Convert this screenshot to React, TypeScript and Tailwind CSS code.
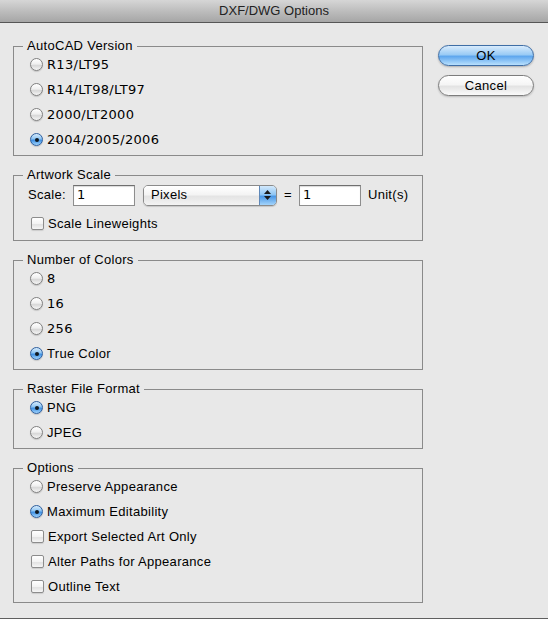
import React from "react";

const sans = { fontFamily: '"Liberation Sans", Arial, sans-serif', letterSpacing: "0.3px" };
const dv = { fontFamily: '"DejaVu Sans", sans-serif' };

function Radio({ checked }: { checked?: boolean }) {
  return checked ? (
    <span className="relative flex h-[13px] w-[13px] shrink-0 items-center justify-center rounded-full border border-[#2f5f9e] bg-[linear-gradient(180deg,#d6ebfc_0%,#8cc4f3_45%,#3d8fe3_55%,#9fd2fb_100%)] shadow-[0_1px_1px_rgba(0,0,0,0.15)]">
      <span className="h-[4px] w-[4px] rounded-full bg-[#101820]" />
    </span>
  ) : (
    <span className="h-[13px] w-[13px] shrink-0 rounded-full border border-[#808080] bg-[linear-gradient(180deg,#ffffff_0%,#f0f0f0_45%,#d8d8d8_60%,#f6f6f6_100%)] shadow-[0_1px_1px_rgba(0,0,0,0.15)]" />
  );
}

function Check() {
  return (
    <span className="h-[13px] w-[13px] shrink-0 rounded-[2px] border border-[#8c8c8c] bg-[linear-gradient(180deg,#ffffff_0%,#f3f3f3_50%,#e2e2e2_60%,#f6f6f6_100%)] shadow-[0_1px_1px_rgba(0,0,0,0.12)]" />
  );
}

function Row({
  kind,
  checked,
  label,
  digits,
}: {
  kind: "radio" | "check";
  checked?: boolean;
  label: string;
  digits?: boolean;
}) {
  return (
    <div className="flex h-[25px] items-center gap-[4px]">
      {kind === "radio" ? <Radio checked={checked} /> : <Check />}
      <span className="text-[13px] leading-[16px] text-black" style={digits ? dv : sans}>
        {label}
      </span>
    </div>
  );
}

function Group({
  title,
  className,
  children,
}: {
  title: string;
  className?: string;
  children: React.ReactNode;
}) {
  return (
    <div className={"relative border border-[#8a8a8a] " + (className ?? "")}>
      <span
        className="absolute left-[9px] top-[-9px] bg-[#e8e8e8] px-[4px] text-[13px] leading-[16px] text-black"
        style={sans}
      >
        {title}
      </span>
      {children}
    </div>
  );
}

function TextBox({ value, w }: { value: string; w: string }) {
  return (
    <div
      className={
        "flex h-[21px] items-center border border-[#8e8e8e] border-t-[#6f6f6f] bg-white pl-[3px] shadow-[inset_0_1px_1px_rgba(0,0,0,0.15)] " +
        w
      }
    >
      <span className="text-[13px] leading-[16px] text-black" style={dv}>
        {value}
      </span>
    </div>
  );
}

export default function App() {
  return (
    <div className="flex h-[619px] w-[548px] flex-col overflow-hidden border-b border-[#5f5f5f] bg-[#e8e8e8]" style={sans}>
      <div className="flex h-[23px] shrink-0 items-center justify-center border-b border-[#565656] bg-[linear-gradient(180deg,#d6d6d6_0%,#bdbdbd_50%,#a6a6a6_100%)]">
        <span className="text-[13px] leading-[16px] tracking-[0px] text-[#222]">DXF/DWG Options</span>
      </div>

      <div className="flex items-start pl-[13px]">
        <div className="flex w-[410px] flex-col gap-[19px] pt-[23px]">
          <Group title="AutoCAD Version" className="h-[110px] pl-[16px] pt-[5px]">
            <Row kind="radio" label="R13/LT95" digits />
            <Row kind="radio" label="R14/LT98/LT97" digits />
            <Row kind="radio" label="2000/LT2000" digits />
            <Row kind="radio" checked label="2004/2005/2006" digits />
          </Group>

          <Group title="Artwork Scale" className="h-[66px] pl-[14px] pt-[8px]">
            <div className="flex h-[22px] items-center">
              <span className="text-[13px] leading-[16px]">Scale:</span>
              <div className="ml-[7px]">
                <TextBox value="1" w="w-[62px]" />
              </div>
              <div className="ml-[8px] flex h-[21px] w-[134px] overflow-hidden rounded-[5px] border border-[#8a8a8a] shadow-[0_1px_1px_rgba(0,0,0,0.15)]">
                <div className="flex flex-1 items-center bg-[linear-gradient(180deg,#ffffff_0%,#f4f4f4_45%,#e4e4e4_55%,#f3f3f3_100%)] pl-[7px]">
                  <span className="text-[13px] leading-[16px]">Pixels</span>
                </div>
                <div className="flex w-[17px] flex-col items-center justify-center gap-[2px] border-l border-[#5f88b8] bg-[linear-gradient(180deg,#d3e9fc_0%,#8fc6f4_45%,#4b98e6_55%,#a4d4fb_100%)]">
                  <svg width="7" height="4" viewBox="0 0 7 4">
                    <path d="M3.5 0L7 4H0z" fill="#1a1a1a" />
                  </svg>
                  <svg width="7" height="4" viewBox="0 0 7 4">
                    <path d="M0 0H7L3.5 4z" fill="#1a1a1a" />
                  </svg>
                </div>
              </div>
              <span className="ml-[4px] w-[14px] text-center text-[13px] leading-[16px]">=</span>
              <div className="ml-[4px]">
                <TextBox value="1" w="w-[62px]" />
              </div>
              <span className="ml-[7px] text-[13px] leading-[16px]">Unit(s)</span>
            </div>
            <div className="mt-[5px] pl-[3px]">
              <Row kind="check" label="Scale Lineweights" />
            </div>
          </Group>

          <Group title="Number of Colors" className="h-[110px] pl-[16px] pt-[5px]">
            <Row kind="radio" label="8" digits />
            <Row kind="radio" label="16" digits />
            <Row kind="radio" label="256" digits />
            <Row kind="radio" checked label="True Color" />
          </Group>

          <Group title="Raster File Format" className="h-[60px] pl-[16px] pt-[5px]">
            <Row kind="radio" checked label="PNG" />
            <Row kind="radio" label="JPEG" />
          </Group>

          <Group title="Options" className="h-[135px] pl-[16px] pt-[5px]">
            <Row kind="radio" label="Preserve Appearance" />
            <Row kind="radio" checked label="Maximum Editability" />
            <div className="pl-[1px]">
              <Row kind="check" label="Export Selected Art Only" />
            </div>
            <div className="pl-[1px]">
              <Row kind="check" label="Alter Paths for Appearance" />
            </div>
            <div className="pl-[1px]">
              <Row kind="check" label="Outline Text" />
            </div>
          </Group>
        </div>

        <div className="ml-[15px] flex flex-col gap-[9px] pt-[22px]">
          <button className="flex h-[21px] w-[96px] items-center justify-center rounded-full border border-[#3f6ea6] bg-[linear-gradient(180deg,#d8ebfc_0%,#9acbf5_45%,#5fa7ee_55%,#b9e0fd_100%)] shadow-[0_1px_2px_rgba(0,0,0,0.25)]">
            <span className="text-[13px] leading-[16px] text-black">OK</span>
          </button>
          <button className="flex h-[21px] w-[96px] items-center justify-center rounded-full border border-[#7d7d7d] bg-[linear-gradient(180deg,#ffffff_0%,#f5f5f5_45%,#e3e3e3_55%,#fafafa_100%)] shadow-[0_1px_2px_rgba(0,0,0,0.2)]">
            <span className="text-[13px] leading-[16px] text-black">Cancel</span>
          </button>
        </div>
      </div>
    </div>
  );
}
